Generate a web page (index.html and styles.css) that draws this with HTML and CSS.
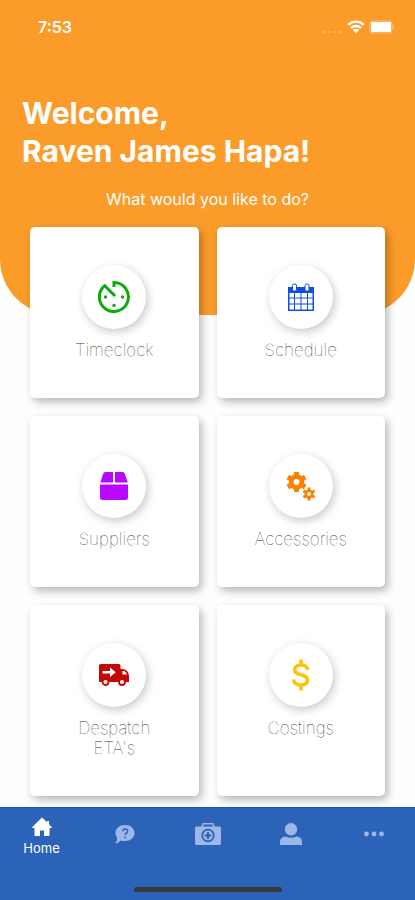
FILE: index.html
```html
<!DOCTYPE html>
<html lang="en">
<head>
<meta charset="utf-8">
<meta name="viewport" content="width=device-width, initial-scale=1">
<title>Home</title>
<link rel="stylesheet" href="styles.css">
</head>
<body>
<div class="app">
  <header class="hero">
    <div class="status">
      <time class="clock">7:53</time>
      <div class="indicators">
        <svg class="signal" width="20" height="14" viewBox="0 0 20 14" aria-hidden="true"><g fill="#fff" opacity=".25"><rect x="0" y="11" width="3" height="2" rx="1"/><rect x="5" y="11" width="3" height="2" rx="1"/><rect x="10" y="11" width="3" height="2" rx="1"/><rect x="15" y="11" width="3" height="2" rx="1"/></g></svg>
        <svg width="18" height="14" viewBox="0 0 18 14" aria-hidden="true"><path d="M1.2 4.800a11.200 11.200 0 0 1 15.600 0M4 8a7.200 7.200 0 0 1 10 0" fill="none" stroke="#fff" stroke-width="2.300"/><path d="M9 13.200L5.900 10.100a4.500 4.500 0 0 1 6.200 0z" fill="#fff"/></svg>
        <svg width="26" height="14" viewBox="0 0 26 14" aria-hidden="true"><rect x="1" y="1" width="22" height="12" rx="3" fill="none" stroke="#fff" stroke-opacity=".4"/><rect x="2" y="2" width="20" height="10" rx="1" fill="#fff"/><path d="M24 5q2 2 0 4z" fill="#fff" opacity=".5"/></svg>
      </div>
    </div>
    <h1>Welcome,<br>Raven James Hapa!</h1>
    <p class="prompt">What would you like to do?</p>
  </header>

  <main class="grid">
    <button class="card" type="button">
      <span class="disc"><svg width="32" height="32" viewBox="0 0 32 32" aria-hidden="true"><path d="M16 6V1.500A14.500 14.500 0 1 1 6.800 4.700L17 15" fill="none" stroke="#0caa0c" stroke-width="3"/><g fill="#0caa0c"><circle cx="7.500" cy="16" r="1.700"/><circle cx="24.500" cy="16" r="1.700"/><circle cx="16" cy="24.500" r="1.700"/></g></svg></span>
      <span class="label">Timeclock</span>
    </button>
    <button class="card" type="button">
      <span class="disc"><svg width="28" height="28" viewBox="0 0 28 28" aria-hidden="true"><path d="M1 4h26v24H1z" fill="#0d50e0"/><g fill="#fff"><path d="M2.500 10H7v4.500H2.500zM8 10h5.500v4.500H8zM14.500 10H20v4.500h-5.500zM21 10h4.500v4.500H21zM2.500 15.500H7v5H2.500zM8 15.500h5.500v5H8zM14.500 15.500H20v5h-5.500zM21 15.500h4.500v5H21zM2.500 21.500H7v5H2.500zM8 21.500h5.500v5H8zM14.500 21.500H20v5h-5.500zM21 21.500h4.500v5H21z"/></g><g fill="#fff" stroke="#0d50e0"><rect x="5.500" y="1" width="4" height="7" rx="1.500"/><rect x="18" y="1" width="4" height="7" rx="1.500"/></g></svg></span>
      <span class="label">Schedule</span>
    </button>
    <button class="card" type="button">
      <span class="disc"><svg width="28" height="28" viewBox="0 0 28 28" aria-hidden="true"><path d="M5.500 0H13v10.500H.3L3 2Q3.700 0 5.500 0zM15 0h7.500q1.800 0 2.500 2l2.700 8.500H15zM0 12.500h28V25.500q0 2.500-2.500 2.500h-23Q0 28 0 25.500z" fill="#ba08ff"/></svg></span>
      <span class="label">Suppliers</span>
    </button>
    <button class="card" type="button">
      <span class="disc"><svg width="30" height="30" viewBox="0 0 30 30" aria-hidden="true"><g fill="none" stroke="#fb8200"><circle cx="10.500" cy="11" r="5.400" stroke-width="4.800"/><g stroke-width="5.200"><path d="M10.500 1v4M10.500 17v4M1.800 6l3.500 2M15.700 14l3.500 2M19.200 6l-3.500 2M5.300 14l-3.500 2"/></g><circle cx="23" cy="23" r="3.200" stroke-width="2.600"/><g stroke-width="2.800"><path d="M23 16.500v2.500M23 27v2.500M17.400 19.700l2.200 1.300M26.400 25l2.200 1.300M28.600 19.700L26.400 21M19.600 25l-2.200 1.300"/></g></g></svg></span>
      <span class="label">Accessories</span>
    </button>
    <button class="card" type="button">
      <span class="disc"><svg width="30" height="22" viewBox="0 0 30 22" aria-hidden="true"><path d="M2 0h18q1.500 0 1.500 1.500V5H24q5.500 1 6 7v6H0V1.500Q0 0 2 0z" fill="#c40808"/><path d="M3.500 7H11V3.500l5.800 4.800-5.800 4.800V9.600H3.500zM23.500 7v3.500H28q-.8-3-3-3.500z" fill="#fff"/><g fill="#fff" stroke="#c40808" stroke-width="1.800"><circle cx="6.500" cy="18" r="3"/><circle cx="23" cy="18" r="3"/></g></svg></span>
      <span class="label">Despatch<br>ETA's</span>
    </button>
    <button class="card" type="button">
      <span class="disc"><svg width="18" height="32" viewBox="0 0 18 32" aria-hidden="true"><path d="M15.700 11C15.300 7.600 12.500 6 9.200 6 5.500 6 2.700 7.700 2.700 10.700c0 6.600 13 3.700 13 10.400 0 3.200-3 4.900-6.700 4.900-4 0-7-2-7.500-5.600M9 .5V6M9 26v5.500" fill="none" stroke="#fbc40a" stroke-width="3.600"/></svg></span>
      <span class="label">Costings</span>
    </button>
  </main>

  <nav class="tabs">
    <a class="tab active" href="#home"><svg width="20" height="20" viewBox="0 0 20 20" aria-hidden="true"><path d="M10 .5L.3 10q-.5 1 .7 1h1.500v7q0 1 1 1H8v-5.500h4V19h4.500q1 0 1-1v-7H19q1.200 0 .7-1L17 7.300V4h-2v1.300z" fill="currentColor"/></svg><span>Home</span></a>
    <a class="tab" href="#help" aria-label="Help"><svg width="22" height="20" viewBox="0 0 22 20" aria-hidden="true"><path d="M11 1c5.500 0 9.500 3.500 9.500 8s-4 8-9.500 8q-2 0-3.800-.6Q4.500 19 1 19.300 3.300 17 3.200 14 1.500 11.800 1.500 9C1.500 4.500 5.500 1 11 1z" fill="currentColor"/><path d="M8.800 7.300c.2-3 4.800-2.900 4.800 0 0 1.800-2.400 1.800-2.400 3.700M11.200 12.500v1.700" fill="none" stroke="#2b63b9" stroke-width="1.500"/></svg></a>
    <a class="tab" href="#health" aria-label="First aid"><svg width="26" height="22" viewBox="0 0 26 22" aria-hidden="true"><path d="M7.500 4V1.800Q7.500.8 8.500.8h9q1 0 1 1V4" fill="none" stroke="currentColor" stroke-width="1.600"/><rect y="3.500" width="26" height="18.500" rx="1.500" fill="currentColor"/><circle cx="13" cy="12.500" r="5.800" fill="none" stroke="#2b63b9" stroke-width="1.700"/><path d="M13 9v7M9.500 12.500h7" stroke="#2b63b9" stroke-width="2.200"/></svg></a>
    <a class="tab" href="#profile" aria-label="Profile"><svg width="22" height="22" viewBox="0 0 22 22" aria-hidden="true"><circle cx="11" cy="6.300" r="6.200" fill="currentColor"/><path d="M0 22v-3q0-5 5.500-5.500 5.500 2.500 11 0Q22 14 22 19v3z" fill="currentColor"/></svg></a>
    <a class="tab" href="#more" aria-label="More"><svg width="20" height="6" viewBox="0 0 20 6" aria-hidden="true"><g fill="currentColor"><circle cx="2.500" cy="3" r="2.400"/><circle cx="10" cy="3" r="2.400"/><circle cx="17.500" cy="3" r="2.400"/></g></svg></a>
    <span class="home-bar"></span>
  </nav>
</div>
</body>
</html>
```
FILE: styles.css
```css
* { box-sizing: border-box; }

body {
  margin: 0;
  background: #fefefe;
  font-family: Inter, "Liberation Sans", sans-serif;
}

.app {
  min-height: 100vh;
  display: flex;
  flex-direction: column;
}

.hero {
  padding: 16px 22px 104px;
  background: #fb9c2a;
  border-radius: 0 0 56px 56px;
  color: #fff;
}

.status {
  display: flex;
  justify-content: space-between;
  align-items: center;
  height: 22px;
  padding-left: 16px;
}

.clock {
  font-size: 16px;
  font-weight: 600;
}

.indicators {
  display: flex;
  align-items: center;
  gap: 4px;
  margin-right: -2px;
}

h1 {
  margin: 56px 0 0;
  font-size: 30px;
  line-height: 38px;
  font-weight: 700;
}

.prompt {
  margin: 17px 0 0;
  font-size: 16px;
  line-height: 24px;
  text-align: center;
}

.grid {
  display: grid;
  grid-template-columns: 1fr 1fr;
  gap: 18px;
  margin-top: -88px;
  padding: 0 30px 11px;
  flex: 1;
  align-content: start;
}

.card {
  display: flex;
  flex-direction: column;
  align-items: center;
  justify-content: flex-start;
  gap: 11px;
  padding: 38px 8px;
  border: 0;
  border-radius: 5px;
  background: #fff;
  box-shadow: 3px 4px 9px rgba(0, 0, 0, .28);
  font: inherit;
  color: #333;
}

.disc {
  display: flex;
  align-items: center;
  justify-content: center;
  width: 64px;
  height: 64px;
  border-radius: 50%;
  background: #fff;
  box-shadow: 2px 3px 10px rgba(0, 0, 0, .22);
}

.label {
  font-size: 17px;
  line-height: 20px;
  font-weight: 100;
}

.tabs {
  position: sticky;
  bottom: 0;
  display: grid;
  grid-template-columns: repeat(5, 1fr);
  height: 93px;
  background: #2b63b9;
  border-top: 1px solid #1b54ae;
}

.tab {
  display: flex;
  flex-direction: column;
  align-items: center;
  justify-content: center;
  height: 52px;
  color: #9cb7e8;
  font-size: 13px;
  line-height: 16px;
  text-decoration: none;
}

.tab.active {
  color: #fff;
  gap: 3px;
  height: 57px;
}

.home-bar {
  position: absolute;
  bottom: 8px;
  left: 50%;
  width: 148px;
  height: 5px;
  margin-left: -74px;
  border-radius: 3px;
  background: #333a3d;
}
```
